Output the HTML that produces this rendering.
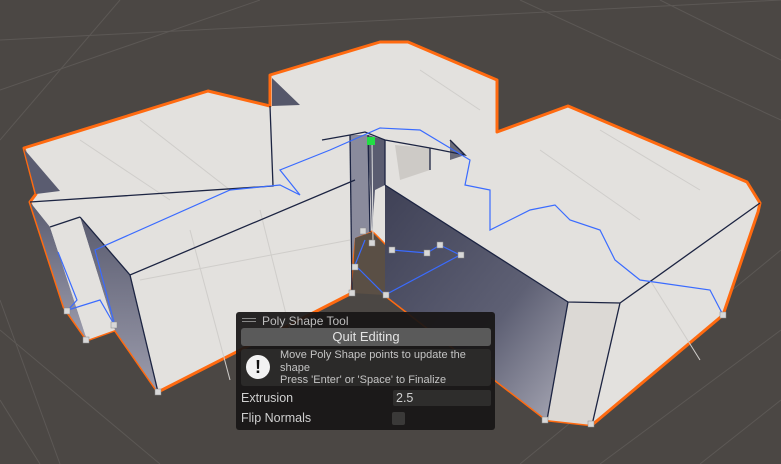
<!DOCTYPE html>
<html><head><style>
body{margin:0;width:781px;height:464px;overflow:hidden;background:#4b4744;font-family:"Liberation Sans",sans-serif;position:relative}
svg{position:absolute;left:0;top:0}
.p{position:absolute;left:236px;top:312px;width:259px;height:118px;background:rgba(24,22,21,0.93);border-radius:3px}
.t{position:absolute;color:#cfcfcf;font-size:12px}
</style></head><body>
<svg width="781" height="464" viewBox="0 0 781 464">
<defs>
<linearGradient id="d" x1="0" y1="0" x2="1" y2="1"><stop offset="0" stop-color="#3f4156"/><stop offset="0.6" stop-color="#5e6074"/><stop offset="1" stop-color="#a9a9b6"/></linearGradient>
<linearGradient id="d2" x1="0" y1="0" x2="0" y2="1"><stop offset="0" stop-color="#5a5c70"/><stop offset="1" stop-color="#9c9cac"/></linearGradient>
</defs>
<g stroke="#5c5855" stroke-width="1" fill="none">
<line x1="0" y1="40" x2="781" y2="0"/><line x1="0" y1="90" x2="260" y2="0"/><line x1="520" y1="0" x2="781" y2="120"/>
<line x1="0" y1="300" x2="60" y2="464"/><line x1="0" y1="400" x2="40" y2="464"/><line x1="160" y1="464" x2="0" y2="330"/>
<line x1="600" y1="464" x2="781" y2="330"/><line x1="700" y1="464" x2="781" y2="400"/><line x1="781" y1="250" x2="520" y2="464"/>
<line x1="0" y1="140" x2="120" y2="0"/><line x1="660" y1="0" x2="781" y2="60"/>
</g>
<polygon points="24,148 208,91 270,106 270,75 380,42 408,42 497,80 497,132 568,106 747,182 760,203 758,212 723,315 592,425 547,420 385,295 385,245 372,232 355,238 352,293 158,392 115,330 87,340 68,313 64,307 30,202 36,194" fill="#e3e1de" stroke="#ff6a10" stroke-width="3" stroke-linejoin="round"/>
<polygon points="355,238 372,232 385,245 385,295 352,293" fill="#5a4f45"/>
<polygon points="385,185 568,302 547,420 385,295" fill="url(#d)"/>
<polygon points="80,217 130,275 158,392 115,330" fill="url(#d2)"/>
<polygon points="30,202 50,227 87,340 64,307" fill="url(#d2)"/>
<polygon points="50,227 80,217 115,330 87,340" fill="#e3e1de"/>
<polygon points="24,149 60,191 36,194" fill="#5a5c70"/>
<polygon points="568,302 620,303 592,425 547,420" fill="#dcd9d5"/>
<polygon points="272,78 300,105 272,106" fill="#55576a"/>
<polygon points="350,135 368,135 370,232 355,238 352,265" fill="#8a8b9c"/>
<polygon points="368,135 385,140 385,185 375,190 372,232" fill="#5a5c70"/>
<polygon points="395,145 430,148 430,170 400,180" fill="#cdcac6"/>
<polygon points="450,140 465,155 450,160" fill="#6a6b7a"/>
<g stroke="#cfcdca" stroke-width="1" fill="none">
<line x1="140" y1="120" x2="230" y2="190"/><line x1="80" y1="140" x2="170" y2="200"/><line x1="190" y1="230" x2="230" y2="380"/><line x1="260" y1="210" x2="290" y2="330"/><line x1="140" y1="280" x2="350" y2="240"/>
<line x1="600" y1="130" x2="700" y2="190"/><line x1="540" y1="150" x2="640" y2="220"/><line x1="650" y1="280" x2="700" y2="360"/><line x1="420" y1="70" x2="480" y2="110"/>
</g>
<g stroke="#1c2442" stroke-width="1.3" fill="none">
<polyline points="30,202 273,186 270,106"/>
<polyline points="80,217 130,275 355,180"/>
<line x1="130" y1="275" x2="158" y2="392"/>
<line x1="80" y1="217" x2="50" y2="227"/>
<polyline points="385,185 568,302 620,303 760,203"/>
<line x1="568" y1="302" x2="547" y2="420"/><line x1="620" y1="303" x2="592" y2="425"/>
<polyline points="322,140 350,135 365,132 385,140 430,148 465,155 450,140"/>
<line x1="350" y1="135" x2="352" y2="293"/><line x1="368" y1="135" x2="370" y2="232"/>
<line x1="385" y1="140" x2="385" y2="185"/><line x1="430" y1="148" x2="430" y2="170"/>
</g>
<polyline points="58,252 77,300 68,310 100,300 115,326 95,250 230,190 280,185 300,195 280,170 330,150 380,128 420,130 470,160 465,185 490,190 490,230 530,210 555,205 570,220 600,230 615,260 640,280 710,290 723,315" fill="none" stroke="#3a6bff" stroke-width="1.2"/>
<polyline points="392,250 427,253 440,245 460,255 385,295 355,265 365,240" fill="none" stroke="#3a6bff" stroke-width="1.2"/>
<line x1="372" y1="140" x2="373" y2="242" stroke="#ddd" stroke-width="1"/>
<rect x="367" y="137" width="8" height="8" fill="#22dd44"/>
<g fill="#d8d8d8" stroke="#888" stroke-width="0.5">
<rect x="64" y="308" width="6" height="6"/><rect x="83" y="337" width="6" height="6"/><rect x="111" y="322" width="6" height="6"/><rect x="155" y="389" width="6" height="6"/><rect x="349" y="290" width="6" height="6"/><rect x="352" y="264" width="6" height="6"/><rect x="360" y="228" width="6" height="6"/><rect x="369" y="240" width="6" height="6"/><rect x="389" y="247" width="6" height="6"/><rect x="424" y="250" width="6" height="6"/><rect x="437" y="242" width="6" height="6"/><rect x="458" y="252" width="6" height="6"/><rect x="383" y="292" width="6" height="6"/><rect x="542" y="417" width="6" height="6"/><rect x="588" y="421" width="6" height="6"/><rect x="720" y="312" width="6" height="6"/>
</g>
</svg>
<div class="p">
<div style="position:absolute;left:6px;top:6px;width:14px;height:1px;background:#888;box-shadow:0 3px 0 #888"></div>
<div class="t" style="left:26px;top:2px;font-size:12px;color:#bdbdbd">Poly Shape Tool</div>
<div style="position:absolute;left:5px;top:16px;width:250px;height:18px;background:#5a5a5a;border-radius:3px;color:#e4e4e4;font-size:13px;text-align:center;line-height:18px">Quit Editing</div>
<div style="position:absolute;left:5px;top:37px;width:250px;height:37px;background:#2b2a29;border-radius:3px"></div>
<div style="position:absolute;left:10px;top:43px;width:24px;height:24px;border-radius:50%;background:#f2f2f2;color:#111;font-weight:bold;font-size:18px;text-align:center;line-height:24px">!</div>
<div class="t" style="left:44px;top:37px;font-size:11px;line-height:12.5px;color:#c4c4c4">Move Poly Shape points to update the<br>shape<br>Press 'Enter' or 'Space' to Finalize</div>
<div class="t" style="left:5px;top:79px;font-size:12.5px">Extrusion</div>
<div style="position:absolute;left:157px;top:78px;width:98px;height:16px;background:#2e2d2c;border-radius:2px;color:#d0d0d0;font-size:12.5px;line-height:16px;padding-left:3px;box-sizing:border-box">2.5</div>
<div class="t" style="left:5px;top:99px;font-size:12.5px">Flip Normals</div>
<div style="position:absolute;left:156px;top:100px;width:13px;height:13px;background:#3a3938;border-radius:2px"></div>
</div>
</body></html>
